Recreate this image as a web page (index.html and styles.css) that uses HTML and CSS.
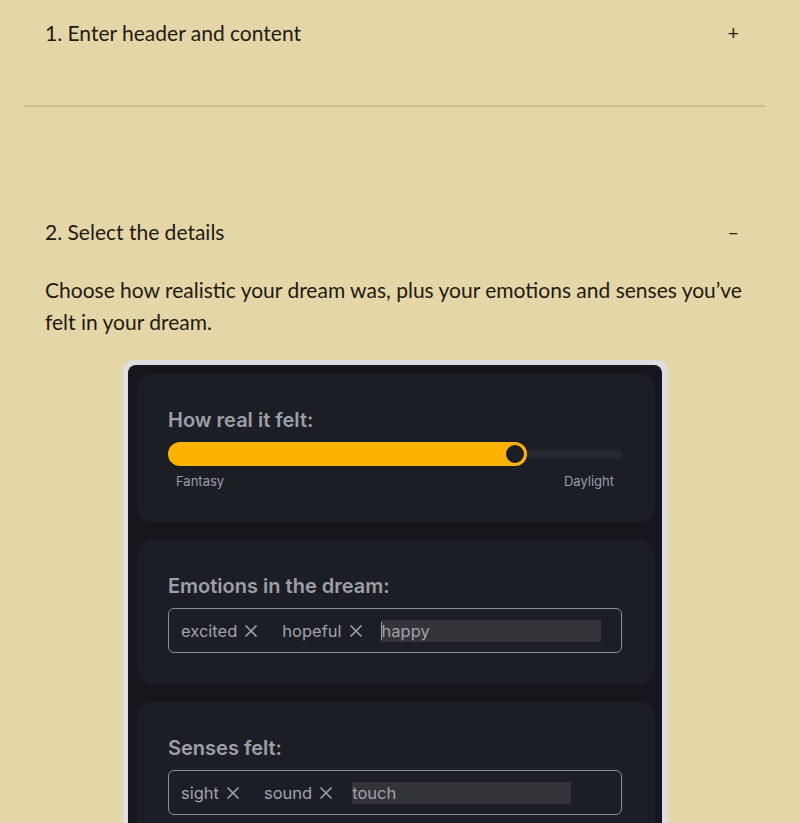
FILE: index.html
```html
<!DOCTYPE html>
<html>
<head>
<meta charset="utf-8">
<link rel="stylesheet" href="styles.css">
</head>
<body>
<div class="page">
  <section class="item">
    <div class="item-head">
      <span class="item-title">1. Enter header and content</span>
      <span class="toggle">+</span>
    </div>
  </section>
  <hr class="divider">
  <section class="item open">
    <div class="item-head">
      <span class="item-title">2. Select the details</span>
      <span class="toggle minus">&#8211;</span>
    </div>
    <p class="item-text">Choose how realistic your dream was, plus your emotions and senses you’ve felt in your dream.</p>
    <div class="shot">
      <div class="shot-inner">
        <div class="card card-slider">
          <div class="card-title">How real it felt:</div>
          <div class="slider">
            <div class="track"></div>
            <div class="fill" style="width: 359px"></div>
            <div class="thumb" style="left: 336px"></div>
          </div>
          <div class="slider-labels"><span>Fantasy</span><span>Daylight</span></div>
        </div>
        <div class="card">
          <div class="card-title">Emotions in the dream:</div>
          <div class="tags">
            <span class="tag">excited <svg class="x" viewBox="0 0 14 14"><path d="M1.5 1.5 12.5 12.5M12.5 1.5 1.5 12.5"/></svg></span>
            <span class="tag">hopeful <svg class="x" viewBox="0 0 14 14"><path d="M1.5 1.5 12.5 12.5M12.5 1.5 1.5 12.5"/></svg></span>
            <span class="entry"><span class="caret"></span>happy</span>
          </div>
        </div>
        <div class="card">
          <div class="card-title">Senses felt:</div>
          <div class="tags">
            <span class="tag">sight <svg class="x" viewBox="0 0 14 14"><path d="M1.5 1.5 12.5 12.5M12.5 1.5 1.5 12.5"/></svg></span>
            <span class="tag">sound <svg class="x" viewBox="0 0 14 14"><path d="M1.5 1.5 12.5 12.5M12.5 1.5 1.5 12.5"/></svg></span>
            <span class="entry short">touch</span>
          </div>
        </div>
      </div>
    </div>
  </section>
</div>
</body>
</html>
```

FILE: styles.css
```css
html, body {
  margin: 0;
  padding: 0;
  background: #e4d6a7;
  overflow: hidden;
}
body {
  font-family: Lato, "Noto Sans", sans-serif;
  color: #1f1a12;
}
.page {
  padding: 0 24px 0 24px;
  width: 742px;
}
.item-head {
  display: flex;
  justify-content: space-between;
  align-items: center;
  padding: 0 27px 0 21px;
  height: 64px;
  font-size: 21px;
}
.toggle {
  font-size: 20px;
  font-weight: 400;
  color: #2a2418;
}
.divider {
  border: none;
  height: 2px;
  background: #cdbf8f;
  margin: 41px 0 0 0;
}
.open {
  margin-top: 92px;
}
.item-text {
  margin: 11px 0 0 21px;
  font-size: 21px;
  line-height: 32px;
  width: 700px;
}
.shot {
  margin: 22px 0 0 99px;
  width: 545px;
  height: 480px;
  background: #dedee2;
  border-radius: 11px;
  padding: 5px 6px 0 5px;
  box-sizing: border-box;
}
.shot-inner {
  background: #15171c;
  border-radius: 8px 8px 0 0;
  height: 100%;
  padding: 9px 7px 0 9px;
  box-sizing: border-box;
  display: flex;
  flex-direction: column;
  gap: 18px;
  font-family: Inter, sans-serif;
}
.card {
  background: #1c1e25;
  border-radius: 14px;
  padding: 34px 33px 31px 31px;
}
.card-slider {
  padding-bottom: 33px;
}
.card-title {
  color: #9c9fa8;
  font-weight: 600;
  font-size: 20px;
  line-height: 24px;
  margin-bottom: 10px;
}
.slider {
  position: relative;
  height: 24px;
}
.track {
  position: absolute;
  left: 0;
  right: 0;
  top: 8px;
  height: 8px;
  border-radius: 4px;
  background: #262933;
}
.fill {
  position: absolute;
  left: 0;
  top: 0;
  height: 24px;
  border-radius: 12px;
  background: #fbb300;
}
.thumb {
  position: absolute;
  top: 1px;
  width: 18px;
  height: 18px;
  border-radius: 50%;
  background: #1c1e25;
  border: 2px solid #fbb300;
}
.slider-labels {
  display: flex;
  justify-content: space-between;
  padding: 0 8px;
  margin-top: 7px;
  font-size: 13px;
  color: #9a9da6;
}
.tags {
  border: 1.5px solid #8a8e98;
  border-radius: 6px;
  height: 45px;
  box-sizing: border-box;
  display: flex;
  align-items: center;
  padding: 0 12px;
  gap: 24px;
  color: #a0a3ab;
  font-size: 16.5px;
  white-space: nowrap;
}
.tag {
  display: inline-flex;
  align-items: center;
  gap: 7px;
}
.tag .x {
  width: 14px;
  height: 14px;
  stroke: #a0a3ab;
  stroke-width: 1.6;
  fill: none;
}
.entry {
  background: #333438;
  height: 22px;
  width: 220px;
  line-height: 22px;
  margin-left: -6px;
}
.entry.short {
  width: 219px;
  margin-left: -5px;
}
.caret {
  display: inline-block;
  width: 1px;
  height: 18px;
  background: #a0a3ab;
  vertical-align: -3px;
}
```
